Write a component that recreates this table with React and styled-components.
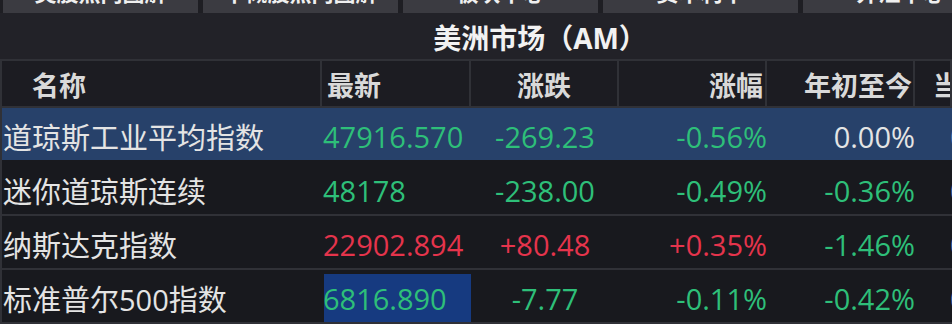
import React from "react";
import styled, { createGlobalStyle } from "styled-components";

const Global = createGlobalStyle`
  html, body { margin: 0; padding: 0; background: #1d1d22; }
  body { width: 952px; height: 324px; overflow: hidden; }
`;

const Page = styled.div`
  width: 952px;
  height: 324px;
  overflow: hidden;
  background: #222228;
  font-family: "Open Sans", "Noto Sans CJK SC", sans-serif;
  display: flex;
  flex-direction: column;
`;

const TabBar = styled.div`
  height: 13px;
  flex: none;
  overflow: hidden;
  display: flex;
  gap: 5px;
  padding-left: 3px;
  background: #1e1e23;
`;

const Tab = styled.div`
  width: 195px;
  flex: none;
  background: #3b3b41;
  color: #f0f0f0;
  font-size: 22px;
  line-height: 24px;
  font-weight: 700;
  text-align: center;
  margin-top: -20px;
  height: 33px;
  white-space: nowrap;
  overflow: hidden;
`;

const Title = styled.div`
  height: 48px;
  flex: none;
  display: flex;
  align-items: center;
  justify-content: center;
  padding-left: 128px;
  padding-top: 2px;
  box-sizing: border-box;
  color: #f2f2f2;
  font-size: 28px;
  font-weight: 700;
  border-bottom: 2px solid #303137;
`;

const Grid = styled.div`
  display: grid;
  grid-template-columns: 320px 149px 148px 148px 148px 1fr;
  border-left: 2px solid #303137;
`;

const Head = styled.div`
  height: 45px;
  display: flex;
  align-items: center;
  justify-content: ${(p) => p.$align};
  background: #1c1c22;
  border-right: 2px solid #303137;
  border-bottom: 2px solid #303137;
  padding: ${(p) => p.$pad};
  padding-top: 2px;
  box-sizing: border-box;
  height: 47px;
  color: #d9d9d9;
  font-size: 27px;
  font-weight: 700;
  white-space: nowrap;
  overflow: hidden;
`;

const Cell = styled.div`
  height: 54px;
  display: flex;
  align-items: center;
  justify-content: ${(p) => p.$align};
  padding: ${(p) => p.$pad};
  padding-top: 4px;
  box-sizing: border-box;
  background: ${(p) => (p.$selected ? "#27416a" : "#18191e")};
  border-bottom: 2px solid ${(p) => (p.$selected ? "#18191e" : "#303137")};
  ${(p) =>
    p.$flash &&
    `background-image: linear-gradient(#163a80, #163a80);
     background-repeat: no-repeat;
     background-position: 2px 4px;
     background-size: calc(100% - 2px) 100%;`}
  color: ${(p) => p.$color};
  font-size: 29px;
  white-space: nowrap;
  overflow: hidden;
`;

const GREEN = "#2ebf79";
const RED = "#e5344c";
const WHITE = "#e4e4e4";

const cols = [
  { label: "名称", align: "flex-start", hpad: "0 0 0 30px", cpad: "0 0 0 1px" },
  { label: "最新", align: "flex-start", hpad: "0 0 0 5px", cpad: "0 0 0 1px" },
  { label: "涨跌", align: "center", hpad: "0", cpad: "0" },
  { label: "涨幅", align: "flex-end", hpad: "0 2px 0 0", cpad: "0" },
  { label: "年初至今", align: "flex-end", hpad: "0 1px 0 0", cpad: "0" },
  { label: "当日", align: "flex-start", hpad: "0 0 0 18px", cpad: "0 0 0 35px" },
];

const rows = [
  { name: "道琼斯工业平均指数", last: "47916.570", chg: "-269.23", pct: "-0.56%", ytd: "0.00%", ytdColor: WHITE, dir: "down", selected: true },
  { name: "迷你道琼斯连续", last: "48178", chg: "-238.00", pct: "-0.49%", ytd: "-0.36%", ytdColor: GREEN, dir: "down" },
  { name: "纳斯达克指数", last: "22902.894", chg: "+80.48", pct: "+0.35%", ytd: "-1.46%", ytdColor: GREEN, dir: "up" },
  { name: "标准普尔500指数", last: "6816.890", chg: "-7.77", pct: "-0.11%", ytd: "-0.42%", ytdColor: GREEN, dir: "down", flash: true },
];

export default function App() {
  const tabs = ["美股热门图解", "中概股热门图解", "板块中心", "资本利率", "外汇中心"];
  return (
    <>
      <Global />
      <Page>
        <TabBar>
          {tabs.map((t) => (
            <Tab key={t}>{t}</Tab>
          ))}
        </TabBar>
        <Title>美洲市场（AM）</Title>
        <Grid>
          {cols.map((c) => (
            <Head key={c.label} $align={c.align} $pad={c.hpad}>
              {c.label}
            </Head>
          ))}
          {rows.map((r) => {
            const col = r.dir === "up" ? RED : GREEN;
            const vals = [
              { v: r.name, color: WHITE },
              { v: r.last, color: col, flash: r.flash },
              { v: r.chg, color: col },
              { v: r.pct, color: col },
              { v: r.ytd, color: r.ytdColor },
              { v: "0.00%", color: "#6f8ab3" },
            ];
            return vals.map((c, i) => (
              <Cell
                key={r.name + i}
                $align={cols[i].align}
                $pad={cols[i].cpad}
                $selected={r.selected}
                $flash={c.flash}
                $color={c.color}
              >
                {c.v}
              </Cell>
            ));
          })}
        </Grid>
      </Page>
    </>
  );
}
